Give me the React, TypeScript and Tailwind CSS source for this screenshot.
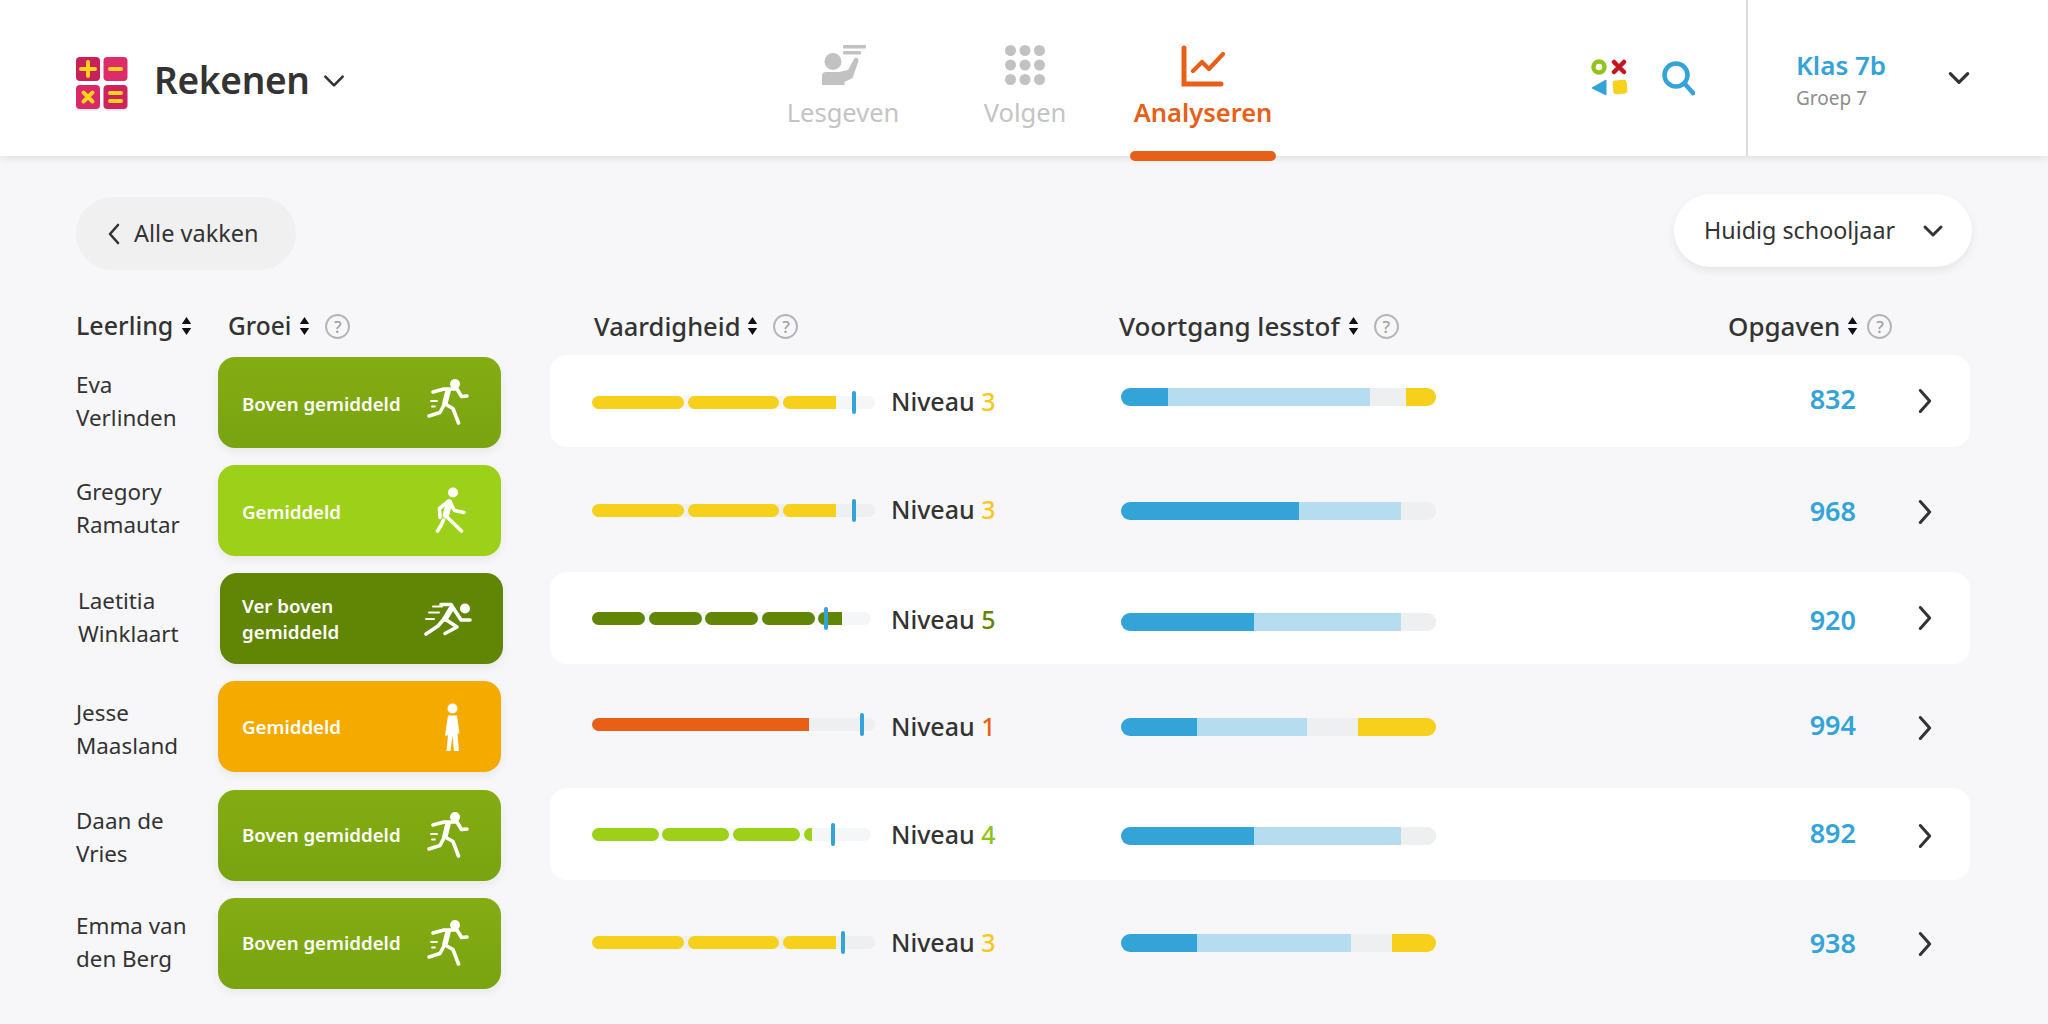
import React from "react";

const F = "font-['Noto_Sans','Liberation_Sans',sans-serif]";

function Chev({ dir = "down", size = 20, sw = 2.6, color = "#333" }: { dir?: "down" | "left" | "right"; size?: number; sw?: number; color?: string }) {
  const d = dir === "down" ? "M4 8l8 8 8-8" : dir === "left" ? "M16 3l-8 9 8 9" : "M8 3l8 9-8 9";
  return (
    <svg width={size} height={size} viewBox="0 0 24 24" fill="none" stroke={color} strokeWidth={sw} strokeLinecap="round" strokeLinejoin="round">
      <path d={d} />
    </svg>
  );
}

function Sort() {
  return (
    <svg width="11" height="20" viewBox="0 0 11 20" fill="#111" className="ml-[8px] shrink-0">
      <path d="M5.500 1l4.700 7H.8zM5.500 19l4.700-7H.8z" />
    </svg>
  );
}

function Help() {
  return (
    <span className="ml-[15px] w-[25px] h-[25px] rounded-full border-2 border-[#b5b5b5] text-[#a0a0a0] text-[17px] leading-none flex items-center justify-center shrink-0">?</span>
  );
}

function Logo() {
  return (
    <svg width="52" height="54" viewBox="0 0 52 54" className="shrink-0 mt-[10px]">
      <rect x="0" y="32" width="24" height="22" rx="4" fill="#ececec" />
      <rect x="27.500" y="32" width="24" height="22" rx="4" fill="#ececec" />
      <rect x="0" y="0" width="24" height="24" rx="4" fill="#c92059" />
      <rect x="27.500" y="0" width="24" height="24" rx="4" fill="#dc2c69" />
      <rect x="0" y="28" width="24" height="24" rx="4" fill="#d92866" />
      <rect x="27.500" y="28" width="24" height="24" rx="4" fill="#cf2360" />
      <path d="M12 5v14M5 12h14" stroke="#fbd31f" strokeWidth="4" strokeLinecap="round" />
      <path d="M34 12h11" stroke="#fbd31f" strokeWidth="4" strokeLinecap="round" />
      <path d="M7.500 35.500l9 9M16.500 35.500l-9 9" stroke="#fbd31f" strokeWidth="4" strokeLinecap="round" />
      <path d="M34 36h11M34 44h11" stroke="#fbd31f" strokeWidth="4" strokeLinecap="round" />
    </svg>
  );
}

function Teach() {
  return (
    <svg width="44" height="40" viewBox="0 0 44 40" fill="#c2c2c2">
      <rect x="21" y="0" width="23" height="3.500" rx="1" />
      <rect x="21" y="6" width="18" height="3.500" rx="1" />
      <circle cx="11" cy="16.500" r="8.500" />
      <path d="M0 40V31a4 4 0 0 1 4-4h13l9-2 6-11a2.500 2.500 0 0 1 4.500 2l-6 17-8 4v3z" />
    </svg>
  );
}

function Dots() {
  const xs = [5.500, 20, 34.500];
  return (
    <svg width="40" height="40" viewBox="0 0 40 40" fill="#c2c2c2">
      {xs.map((y, j) => xs.map((x, i) => <circle key={i + "-" + j} cx={x} cy={y} r="5.500" />))}
    </svg>
  );
}

function ChartI() {
  return (
    <svg width="44" height="42" viewBox="0 0 44 42" fill="none" stroke="#e85f17" strokeWidth="5" strokeLinecap="round" strokeLinejoin="miter">
      <path d="M3 3v36h37" />
      <path d="M12 26l9-9 7 7 14-15" strokeWidth="4.200" strokeLinejoin="round" />
    </svg>
  );
}

function Shapes() {
  return (
    <svg width="38" height="38" viewBox="0 0 38 38">
      <circle cx="8" cy="8" r="5.500" fill="none" stroke="#93c21c" strokeWidth="4.500" />
      <path d="M23 3l10 10M33 3L23 13" stroke="#c4161c" strokeWidth="4.500" strokeLinecap="round" />
      <path d="M15 21v15L1 29z" fill="#34a3d8" stroke="#34a3d8" strokeWidth="1" strokeLinejoin="round" />
      <rect x="22" y="21" width="14" height="14" rx="3" fill="#f7d11c" transform="rotate(-5 29 28)" />
    </svg>
  );
}

function Search() {
  return (
    <svg width="34" height="36" viewBox="0 0 34 36" fill="none" stroke="#34a3d8" strokeWidth="4.500" strokeLinecap="round">
      <circle cx="15" cy="15" r="11.500" />
      <path d="M24 24l8 9" />
    </svg>
  );
}

function Person({ kind }: { kind: string }) {
  const p = { fill: "none", stroke: "#fff", strokeWidth: 3.6, strokeLinecap: "round" as const, strokeLinejoin: "round" as const };
  if (kind === "run")
    return (
      <svg width="42" height="46" viewBox="0 0 42 46">
        <circle cx="28" cy="5" r="5" fill="#fff" />
        <path {...p} d="M6 13l11-3h13l4.500 7.500 5.500-.5" />
        <path {...p} strokeWidth={5.500} d="M21 12l-3 12" />
        <path {...p} d="M18 25l8 4.500L31.500 44" />
        <path {...p} d="M17.500 25L13 33.500 2 37" />
        <path {...p} strokeWidth={1.800} d="M4 22h6M5 27.500h3" />
      </svg>
    );
  if (kind === "walk")
    return (
      <svg width="31" height="46" viewBox="0 0 31 46">
        <circle cx="18" cy="5.500" r="5" fill="#fff" />
        <path {...p} d="M12.500 15L4.500 21.500l.5 9" />
        <path {...p} d="M15 15l4.500 8.500 9.500 2" />
        <path {...p} strokeWidth={6.500} d="M14 15.500L11 28" />
        <path {...p} d="M11 29l15.500 15" />
        <path {...p} d="M8.500 33L6 38.500 2.500 44" />
      </svg>
    );
  if (kind === "fast")
    return (
      <svg width="48" height="34" viewBox="0 0 48 34">
        <circle cx="41" cy="6.500" r="5" fill="#fff" />
        <path {...p} d="M17 2.500h10L37 18h9" />
        <path {...p} strokeWidth={5.500} d="M27 7l-6 10" />
        <path {...p} d="M21 17l12 8-12 6.500" />
        <path {...p} d="M20 17l-6 7L2 32" />
        <path {...p} strokeWidth={2} d="M9 4.500h9M5 10.500h10M2 17h8" />
      </svg>
    );
  return (
    <svg width="16" height="48" viewBox="0 0 16 48" fill="#fff">
      <circle cx="8.500" cy="5.500" r="5" />
      <path d="M4 12.500h9l2.500 18h-2L15 48H10L8.500 33 6.500 48H2.500L4 32.500H1z" />
    </svg>
  );
}

const iconPad: Record<string, string> = { run: "pr-[18px]", walk: "pr-[14px]", fast: "pr-[22px]", stand: "pr-[10px]" };

type Seg = [number, number];
const Y = "#f6d01a";

function Skill({ segs, color, track, marker, rowWhite }: { segs: Seg[]; color: string; track: number; marker: number; rowWhite: boolean }) {
  return (
    <div className={`relative h-[13px] rounded-full ${rowWhite ? "bg-[#f5f6f8]" : "bg-[#eeeff1]"}`} style={{ width: track }}>
      {segs.map(([x, w], i) => (
        <div
          key={i}
          className={`absolute top-0 h-[13px] ${i === segs.length - 1 ? "rounded-l-full" : "rounded-full"}`}
          style={{ left: x, width: w, backgroundColor: color }}
        />
      ))}
      <div className="absolute top-[-5px] w-[4px] h-[23px] rounded-full bg-[#34a3d8]" style={{ left: marker }} />
    </div>
  );
}

function Progress({ a, b, c, d }: { a: number; b: number; c: number; d: number }) {
  return (
    <div className="flex h-[18px] w-[315px] rounded-full overflow-hidden bg-[#eeeff1]">
      <div className="bg-[#34a3d8]" style={{ width: a }} />
      <div className="bg-[#b6dcf0]" style={{ width: b }} />
      <div className="bg-[#eeeff1]" style={{ width: c }} />
      <div className="bg-[#f6d01a]" style={{ width: d }} />
    </div>
  );
}

const L3: Seg[] = [[0, 92], [96, 91], [191, 53]];
const G = "bg-[linear-gradient(#84ac13,#79a410)]";
const rows = [
  { n: ["Eva", "Verlinden"], label: ["Boven gemiddeld"], bg: G, kind: "run", segs: L3, color: Y, track: 283, marker: 260, lvl: "3", lc: "#f6c81a", p: [47, 202, 36, 30], val: "832", white: true, dx: 0, so: 1, no: 1, po: -4, vo: -2, co: 0, nm: 0, lo: 2 },
  { n: ["Gregory", "Ramautar"], label: ["Gemiddeld"], bg: "bg-[#9dd018]", kind: "walk", segs: L3, color: Y, track: 283, marker: 260, lvl: "3", lc: "#f6c81a", p: [178, 102, 35, 0], val: "968", white: false, dx: 0, so: 1, no: 0, po: 2, vo: 2, co: 3, nm: -1, lo: 2 },
  { n: ["Laetitia", "Winklaart"], label: ["Ver boven", "gemiddeld"], bg: "bg-[#618505]", kind: "fast", segs: [[0, 53], [57, 53], [113, 53], [170, 53], [226, 24]] as Seg[], color: "#618505", track: 279, marker: 232, lvl: "5", lc: "#618505", p: [133, 147, 35, 0], val: "920", white: true, dx: 2, so: 1, no: 2, po: 4, vo: 3, co: 0, nm: -1, lo: 0 },
  { n: ["Jesse", "Maasland"], label: ["Gemiddeld"], bg: "bg-[#f5aa00]", kind: "stand", segs: [[0, 217]] as Seg[], color: "#e85f17", track: 283, marker: 268, lvl: "1", lc: "#e85f17", p: [76, 110, 51, 78], val: "994", white: false, dx: 0, so: -1, no: 1, po: 1, vo: -1, co: 2, nm: 3, lo: 0 },
  { n: ["Daan de", "Vries"], label: ["Boven gemiddeld"], bg: G, kind: "run", segs: [[0, 67], [70, 67], [141, 67], [212, 8]] as Seg[], color: "#9dd018", track: 279, marker: 239, lvl: "4", lc: "#8fc31a", p: [133, 147, 35, 0], val: "892", white: true, dx: 0, so: 0, no: 1, po: 2, vo: -1, co: 2, nm: 3, lo: 0 },
  { n: ["Emma van", "den Berg"], label: ["Boven gemiddeld"], bg: G, kind: "run", segs: L3, color: Y, track: 283, marker: 249, lvl: "3", lc: "#f6c81a", p: [76, 154, 41, 44], val: "938", white: false, dx: 0, so: 0, no: 0, po: 1, vo: 1, co: 2, nm: 0, lo: 0 },
];

export default function App() {
  return (
    <div className={`${F} w-[2048px] h-[1024px] overflow-hidden bg-[#f7f7f9] text-[#333]`}>
      <header className="relative h-[156px] bg-white shadow-[0_2px_8px_rgba(0,0,0,0.10)] flex items-center">
        <div className="w-[772px] pl-[76px] flex items-center shrink-0 mt-[2px]">
          <Logo />
          <span className="ml-[26px] text-[37px] font-semibold leading-none tracking-[-0.3px]">Rekenen</span>
          <span className="ml-[11px] mt-[4px]"><Chev size={26} sw={2.4} /></span>
        </div>
        <nav className="flex h-full items-start shrink-0">
          <div className="w-[142px] pt-[45px] flex flex-col items-center">
            <span className="pl-[2px] h-[40px]"><Teach /></span>
            <span className="mt-[10px] text-[25.500px] leading-[34px] text-[#c4c4c4]">Lesgeven</span>
          </div>
          <div className="w-[120px] ml-[51px] pt-[45px] flex flex-col items-center">
            <span className="h-[40px]"><Dots /></span>
            <span className="mt-[10px] text-[25.500px] leading-[34px] text-[#c4c4c4]">Volgen</span>
          </div>
          <div className="relative w-[146px] ml-[45px] pt-[45px] flex flex-col items-center">
            <span className="h-[40px]"><ChartI /></span>
            <span className="mt-[10px] text-[25.500px] leading-[34px] font-semibold text-[#e85f17]">Analyseren</span>
            <div className="absolute left-0 top-[151px] w-[146px] h-[10px] rounded-full bg-[#e85f17] z-10" />
          </div>
        </nav>
        <div className="ml-auto flex items-center h-full">
          <Shapes />
          <span className="ml-[32px]"><Search /></span>
          <div className="ml-[51px] h-full w-[2px] bg-[#dcdcdc]" />
          <div className="w-[147px] pl-[48px] box-content">
            <div className="text-[26px] leading-[32px] font-semibold text-[#34a3d8] mt-[3px]">Klas 7b</div>
            <div className="text-[19px] leading-[26px] text-[#8d8d8d] mt-[4px]">Groep 7</div>
          </div>
          <div className="w-[105px] pl-[3px]"><Chev size={26} sw={3} /></div>
        </div>
      </header>

      <div className="px-[76px] pt-[45px] flex items-start justify-between">
        <div className="mt-[-4px] w-[220px] h-[73px] rounded-full bg-[#f0f0f0] flex items-center pl-[26px] text-[23.500px]">
          <Chev dir="left" size={24} sw={2.600} />
          <span className="ml-[8px]">Alle vakken</span>
        </div>
        <div className="mt-[-7px] w-[298px] h-[73px] rounded-full bg-white shadow-[0_4px_10px_rgba(0,0,0,0.07)] flex items-center pl-[30px] text-[23.300px]">
          <span>Huidig schooljaar</span>
          <span className="ml-[26px]"><Chev size={24} sw={3} /></span>
        </div>
      </div>

      <div className="flex items-center h-[36px] mt-[38px] pl-[76px] font-medium">
        <div className="w-[152px] flex items-center text-[25px]"><span>Leerling</span><Sort /></div>
        <div className="w-[366px] flex items-center text-[24.500px]"><span>Groei</span><Sort /><Help /></div>
        <div className="w-[525px] flex items-center text-[25.500px]"><span>Vaardigheid</span><span className="-ml-[1px]"><Sort /></span><Help /></div>
        <div className="w-[609px] flex items-center text-[26px]"><span>Voortgang lesstof</span><Sort /><Help /></div>
        <div className="flex items-center text-[26px]"><span>Opgaven</span><span className="-ml-[1px]"><Sort /></span><span className="-ml-[6px]"><Help /></span></div>
      </div>

      <div className="mt-[11px] pl-[76px] flex flex-col gap-[16.250px]">
        {rows.map((r) => (
          <div key={r.val} className="flex items-center h-[92px]">
            <div className="w-[142px] text-[22.400px] leading-[33px]" style={{ paddingLeft: r.dx, marginTop: r.nm * 2 }}>
              <div>{r.n[0]}</div>
              <div>{r.n[1]}</div>
            </div>
            <div style={{ marginLeft: r.dx, paddingLeft: 24 - r.dx }} className={`${r.bg} mt-[2px] w-[283px] h-[91px] rounded-[17px] shadow-[0_4px_10px_rgba(0,0,0,0.06)] flex items-center justify-between text-white font-semibold text-[18.700px] leading-[26px] shrink-0`}>
              <div style={{ marginTop: r.lo * 2 }}>{r.label.map((t) => <div key={t}>{t}</div>)}</div>
              <div className={`w-[88px] flex justify-center ${iconPad[r.kind]}`}><Person kind={r.kind} /></div>
            </div>
            <div style={{ marginLeft: 49 - r.dx }} className={`w-[1420px] h-[92px] rounded-[17px] flex items-center pl-[42px] ${r.white ? "bg-white" : ""}`}>
              <div className="w-[299px] shrink-0" style={{ marginTop: r.so * 2 }}>
                <Skill segs={r.segs} color={r.color} track={r.track} marker={r.marker} rowWhite={r.white} />
              </div>
              <div className="w-[230px] shrink-0 text-[25px] font-medium" style={{ marginTop: r.no * 2 }}>Niveau <span style={{ color: r.lc }}>{r.lvl}</span></div>
              <div style={{ marginTop: r.po * 2 }}><Progress a={r.p[0]} b={r.p[1]} c={r.p[2]} d={r.p[3]} /></div>
              <div className="w-[420px] text-right text-[27px] font-semibold text-[#34a3d8] shrink-0" style={{ marginTop: r.vo * 2 }}>{r.val}</div>
              <div className="ml-[55px]" style={{ marginTop: r.co * 2 }}><Chev dir="right" size={28} sw={2.600} /></div>
            </div>
          </div>
        ))}
      </div>
    </div>
  );
}
